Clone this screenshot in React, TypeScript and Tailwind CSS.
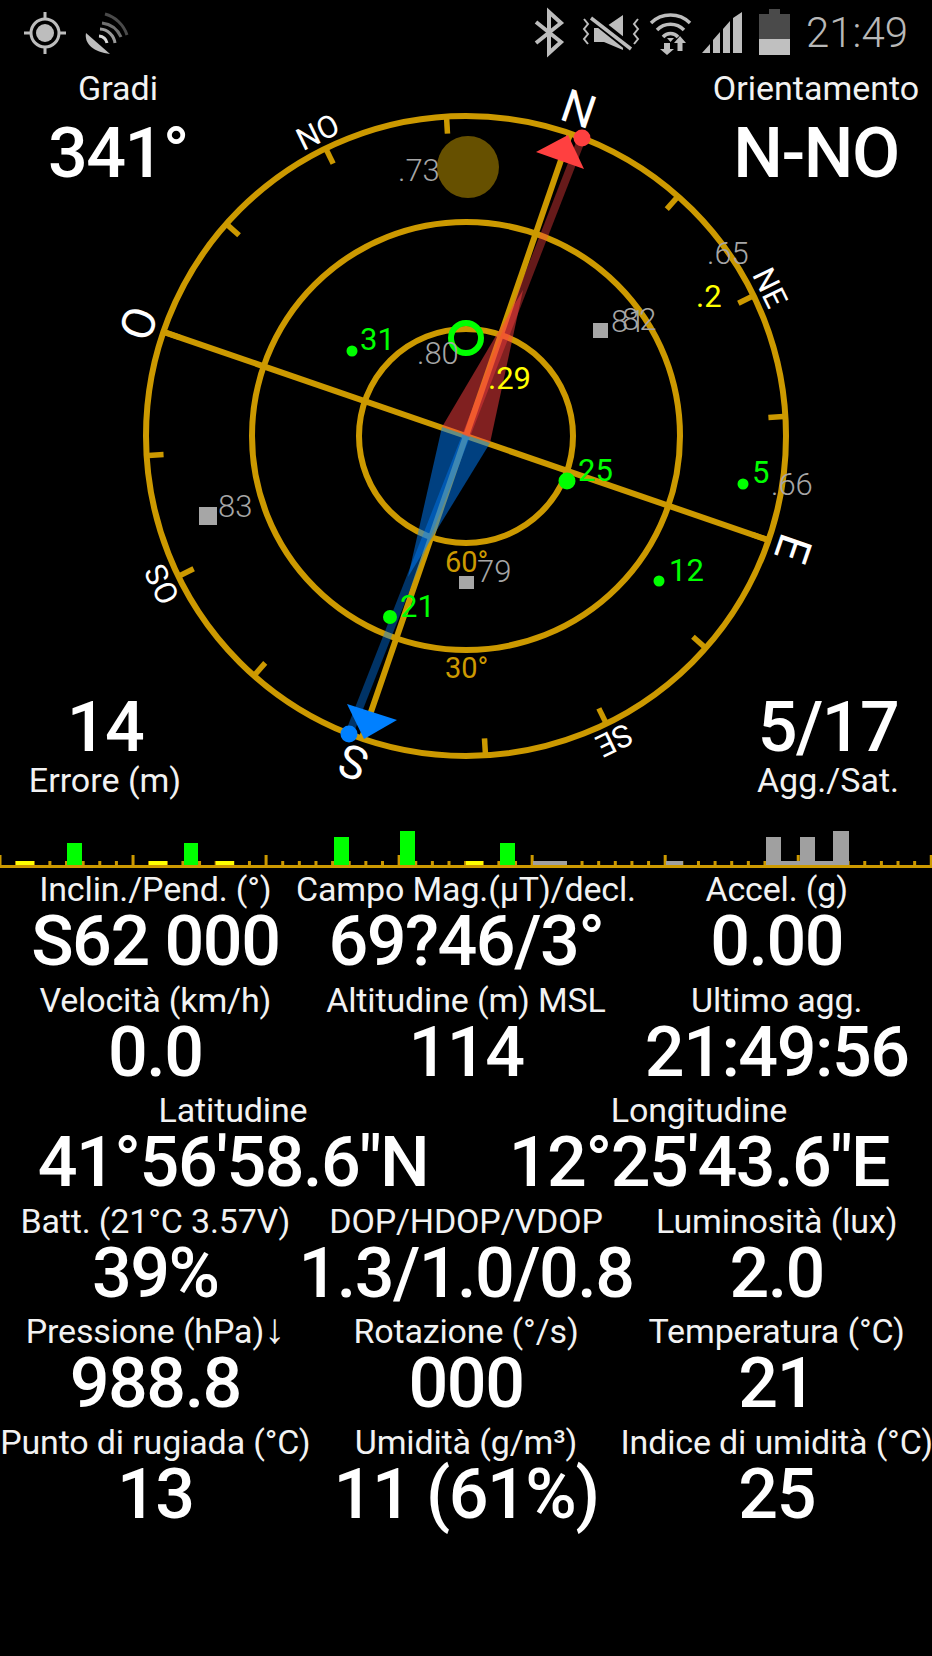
import React from "react";

const GOLD = "#cc9900";
const CX = 466;
const CY = 436;
const ROT = 19;

function polar(r: number, bearing: number): [number, number] {
  const a = ((bearing + ROT) * Math.PI) / 180;
  return [CX + r * Math.sin(a), CY - r * Math.cos(a)];
}

const ticks = Array.from({ length: 16 }, (_, i) => i * 22.5);

const dirLabels: { t: string; b: number; r: number; s: number }[] = [
  { t: "N", b: 0, r: 346, s: 46 },
  { t: "E", b: 90, r: 346, s: 46 },
  { t: "S", b: 180, r: 345, s: 46 },
  { t: "O", b: 270, r: 346, s: 46 },
  { t: "NE", b: 45, r: 338, s: 31 },
  { t: "SE", b: 135, r: 338, s: 31 },
  { t: "OS", b: 225, r: 338, s: 31 },
  { t: "NO", b: 315, r: 338, s: 31 },
];

const GRAY = "#a6a6a6";
const GREEN = "#00ff00";
const YELLOW = "#ffff00";

const satLabels: { t: string; x: number; y: number; c: string; w: number }[] = [
  { t: "31", x: 360, y: 350, c: GREEN, w: 400 },
  { t: ".80", x: 417, y: 364, c: GRAY, w: 300 },
  { t: ".73", x: 398, y: 181, c: GRAY, w: 300 },
  { t: ".29", x: 488, y: 389, c: YELLOW, w: 400 },
  { t: "81", x: 611, y: 332, c: GRAY, w: 300 },
  { t: "82", x: 622, y: 330, c: GRAY, w: 300 },
  { t: ".65", x: 707, y: 264, c: GRAY, w: 300 },
  { t: ".2", x: 696, y: 307, c: YELLOW, w: 400 },
  { t: "25", x: 578, y: 481, c: GREEN, w: 400 },
  { t: "5", x: 752, y: 483, c: GREEN, w: 400 },
  { t: ".66", x: 771, y: 495, c: GRAY, w: 300 },
  { t: "12", x: 669, y: 581, c: GREEN, w: 400 },
  { t: "79", x: 477, y: 582, c: GRAY, w: 300 },
  { t: "83", x: 218, y: 517, c: GRAY, w: 300 },
  { t: "21", x: 400, y: 617, c: GREEN, w: 400 },
];

function Compass() {
  return (
    <svg className="absolute left-0 top-0" width={932} height={820} viewBox="0 0 932 820">
      <circle cx={468} cy={167} r={31} fill="#665000" />
      <g fill="none" stroke={GOLD} strokeWidth={6}>
        <circle cx={CX} cy={CY} r={320} />
        <circle cx={CX} cy={CY} r={214} />
        <circle cx={CX} cy={CY} r={107} />
      </g>
      {ticks.map((b) => {
        const [x1, y1] = polar(322, b);
        const [x2, y2] = polar(303, b);
        return <line key={b} x1={x1} y1={y1} x2={x2} y2={y2} stroke={GOLD} strokeWidth={5.5} />;
      })}
      {[0, 90, 180, 270].map((b) => {
        const [x, y] = polar(320, b);
        return <line key={b} x1={CX} y1={CY} x2={x} y2={y} stroke={GOLD} strokeWidth={6} />;
      })}
      <polygon points="523,290 490,443 442,427" fill="#ff4040" fillOpacity={0.5} />
      <polygon points="408,577 490,443 442,427" fill="#0080ff" fillOpacity={0.5} />
      <line x1={582} y1={138} x2={466} y2={436} stroke="#ff4040" strokeOpacity={0.4} strokeWidth={8} />
      <line x1={349} y1={734} x2={466} y2={436} stroke="#0080ff" strokeOpacity={0.4} strokeWidth={8} />
      <polygon points="536,152 568,135 584,169" fill="#ff4040" />
      <circle cx={582} cy={138} r={8.5} fill="#ff4040" />
      <polygon points="347,704 397,720 364,739" fill="#0080ff" />
      <circle cx={349} cy={734} r={8.5} fill="#0080ff" />
      <circle cx={466} cy={338} r={15} fill="none" stroke={GREEN} strokeWidth={6} />
      <circle cx={352} cy={351} r={5.5} fill={GREEN} />
      <circle cx={567} cy={481} r={8.5} fill={GREEN} />
      <circle cx={743} cy={484} r={5.5} fill={GREEN} />
      <circle cx={659} cy={581} r={5.5} fill={GREEN} />
      <circle cx={390} cy={617} r={7} fill={GREEN} />
      <rect x={593} y={323} width={15} height={15} fill={GRAY} />
      <rect x={459} y={576} width={15} height={13} fill={GRAY} />
      <rect x={199} y={507} width={18} height={18} fill={GRAY} />
      <g fontFamily="Roboto, sans-serif" fontSize={31}>
        <text x={445} y={572} fontSize={29} fill={GOLD}>60°</text>
        <text x={445} y={678} fontSize={29} fill={GOLD}>30°</text>
        {satLabels.map((s) => (
          <text key={s.t} x={s.x} y={s.y} fill={s.c} fontWeight={s.w}>
            {s.t}
          </text>
        ))}
      </g>
      <g fontFamily="Roboto, sans-serif" fontWeight={400} fill="#ffffff" textAnchor="middle">
        {dirLabels.map((d) => {
          const [x, y] = polar(d.r, d.b);
          return (
            <text
              key={d.t}
              x={0}
              y={0}
              fontSize={d.s}
              dominantBaseline="central"
              transform={`translate(${x} ${y}) rotate(${d.b + ROT})`}
            >
              {d.t}
            </text>
          );
        })}
      </g>
    </svg>
  );
}

function StatusLeft() {
  return (
    <svg width={140} height={60} viewBox="0 0 140 60" className="block">
      <g stroke="#bdbdbd" fill="none" strokeWidth={3}>
        <circle cx={45} cy={33} r={14} />
        <path d="M45 12v7M45 47v7M24 33h7M59 33h7" />
      </g>
      <circle cx={45} cy={33} r={9} fill="#bdbdbd" />
      <path d="M86 33 C84 44 94 52 110 54 Z" fill="#bdbdbd" />
      <g fill="none" strokeWidth={3}>
        <path d="M99 36a9 9 0 0 1 8 7" stroke="#d8d8d8" />
        <path d="M100 29a16 16 0 0 1 15 14" stroke="#9a9a9a" />
        <path d="M102 23a24 24 0 0 1 19 14" stroke="#707070" />
        <path d="M105 14a32 32 0 0 1 22 21" stroke="#4a4a4a" />
      </g>
    </svg>
  );
}

function StatusRight() {
  return (
    <svg width={282} height={60} viewBox="520 0 282 60" className="block">
      <path d="M535 22 L560 42 L548 53 V12 L560 23 L535 43" fill="none" stroke="#bdbdbd" strokeWidth={4} />
      <path d="M593 28 h10 l19 -13 v35 l-19 -8 h-10 z" fill="#bdbdbd" />
      <path d="M588 15 L632 50" stroke="#000" strokeWidth={9} />
      <path d="M590 18 L630 49" stroke="#bdbdbd" strokeWidth={3.5} />
      <path d="M583 19l4 5-4 5 4 5-4 5 4 5M637 19l-4 5 4 5-4 5 4 5-4 5" fill="none" stroke="#bdbdbd" strokeWidth={2} />
      <g fill="none" stroke="#bdbdbd" strokeWidth={3.5}>
        <path d="M650 23a28 28 0 0 1 39 0" />
        <path d="M656 30a19 19 0 0 1 27 0" />
        <path d="M662 37a10 10 0 0 1 15 0" />
      </g>
      <path d="M666 38h7l-3.500 4z" fill="#bdbdbd" />
      <path d="M663 43v6h-4l7 6 7-6h-4v-6zM679 36l-6 7h3.500v8h5v-8h3.500z" fill="#bdbdbd" />
      <path d="M701 53 L709 44 V53 Z M712 53 V40 L719 32 V53 Z M722 53 V29 L729 21 V53 Z M732 53 V18 L741 12 V53 Z" fill="#bdbdbd" />
      <rect x={768} y={9} width={11} height={5} fill="#4a4a4a" />
      <rect x={758} y={14} width={31} height={25} fill="#4a4a4a" />
      <rect x={758} y={39} width={31} height={16} fill="#c0c0c0" />
    </svg>
  );
}

const bars: { x: number; w: number; top: number; c: string }[] = [
  { x: 16, w: 18, top: 861, c: "#ffff00" },
  { x: 67, w: 15, top: 843, c: "#00ff00" },
  { x: 149, w: 18, top: 861, c: "#ffff00" },
  { x: 184, w: 14, top: 843, c: "#00ff00" },
  { x: 216, w: 18, top: 861, c: "#ffff00" },
  { x: 334, w: 15, top: 837, c: "#00ff00" },
  { x: 400, w: 15, top: 831, c: "#00ff00" },
  { x: 466, w: 17, top: 861, c: "#ffff00" },
  { x: 500, w: 15, top: 843, c: "#00ff00" },
  { x: 533, w: 34, top: 861, c: "#a0a0a0" },
  { x: 666, w: 17, top: 861, c: "#a0a0a0" },
  { x: 766, w: 15, top: 837, c: "#a0a0a0" },
  { x: 781, w: 19, top: 861, c: "#a0a0a0" },
  { x: 800, w: 15, top: 837, c: "#a0a0a0" },
  { x: 815, w: 18, top: 861, c: "#a0a0a0" },
  { x: 833, w: 16, top: 831, c: "#a0a0a0" },
];

function SignalChart() {
  const step = 16.63;
  const n = Math.floor(932 / step);
  return (
    <svg width={932} height={50} viewBox="0 820 932 50" className="block">
      {Array.from({ length: n + 1 }, (_, i) => {
        const x = i * step;
        const major = i % 8 === 0;
        return <rect key={i} x={x - 1.5} y={major ? 855 : 861} width={3} height={major ? 11 : 5} fill={GOLD} />;
      })}
      {bars.map((b) => (
        <rect key={b.x} x={b.x} y={b.top} width={b.w} height={866 - b.top} fill={b.c} />
      ))}
      <rect x={0} y={865} width={932} height={3} fill={GOLD} />
    </svg>
  );
}

function Stat({ label, value }: { label: React.ReactNode; value: string }) {
  return (
    <div className="flex flex-col items-center whitespace-nowrap">
      <div className="h-10 text-[34px] leading-[36px] tracking-[-0.15px] text-[#f2f2f2]">{label}</div>
      <div className="h-[60px] text-[70px] font-medium leading-[60px] tracking-[-1.5px] text-white">{value}</div>
    </div>
  );
}

function Corner({ label, value, below, className }: { label: string; value: string; below?: boolean; className: string }) {
  return (
    <div className={`flex flex-col items-center whitespace-nowrap ${className}`}>
      {!below && <div className="h-[50px] text-[34px] leading-10 text-[#f2f2f2]">{label}</div>}
      <div className="h-[70px] text-[70px] font-medium leading-[70px] tracking-[-1.5px] text-white">{value}</div>
      {below && <div className="h-10 text-[34px] leading-[36px] text-[#f2f2f2]">{label}</div>}
    </div>
  );
}

export default function App() {
  const rows: [React.ReactNode, string][][] = [
    [["Inclin./Pend. (°)", "S62 000"], ["Campo Mag.(μT)/decl.", "69?46/3°"], ["Accel. (g)", "0.00"]],
    [["Velocità (km/h)", "0.0"], ["Altitudine (m) MSL", "114"], ["Ultimo agg.", "21:49:56"]],
  ];
  const rows2: [React.ReactNode, string][][] = [
    [["Batt. (21°C 3.57V)", "39%"], ["DOP/HDOP/VDOP", "1.3/1.0/0.8"], ["Luminosità (lux)", "2.0"]],
    [
      [<>Pressione (hPa)<span className="text-[42px] font-light leading-[0]">↓</span></>, "988.8"],
      ["Rotazione (°/s)", "000"],
      ["Temperatura (°C)", "21"],
    ],
    [["Punto di rugiada (°C)", "13"], ["Umidità (g/m³)", "11 (61%)"], ["Indice di umidità (°C)", "25"]],
  ];
  return (
    <div className="flex h-[1656px] w-[932px] flex-col overflow-hidden bg-black font-[Roboto,sans-serif] text-white">
      <div className="relative h-[820px] shrink-0">
        <Compass />
        <div className="relative flex h-[820px] flex-col">
          <div className="flex h-[50px] items-start justify-between">
            <StatusLeft />
            <div className="flex items-start">
              <StatusRight />
              <div className="ml-[3px] mr-[24px] pt-[8px] text-[42px] font-light leading-[50px] text-[#b8b8b8]">21:49</div>
            </div>
          </div>
          <div className="flex items-start justify-between pl-[48px] pr-[16px] pt-[18px]">
            <Corner label="Gradi" value="341°" className="w-[140px]" />
            <Corner label="Orientamento" value="N-NO" className="w-[200px]" />
          </div>
          <div className="mt-[504px] flex items-start justify-between pl-[30px] pr-[34px]">
            <Corner label="Errore (m)" value="14" below className="w-[150px]" />
            <Corner label="Agg./Sat." value="5/17" below className="w-[140px]" />
          </div>
        </div>
      </div>
      <SignalChart />
      <div className="flex flex-col gap-[10.5px] pt-[1px]">
        {rows.map((r, i) => (
          <div key={i} className="grid grid-cols-3">
            {r.map(([l, v]) => (
              <Stat key={v} label={l} value={v} />
            ))}
          </div>
        ))}
        <div className="grid grid-cols-2">
          <Stat label="Latitudine" value={"41°56'58.6\"N"} />
          <Stat label="Longitudine" value={"12°25'43.6\"E"} />
        </div>
        {rows2.map((r, i) => (
          <div key={i} className="grid grid-cols-3">
            {r.map(([l, v]) => (
              <Stat key={v} label={l} value={v} />
            ))}
          </div>
        ))}
      </div>
    </div>
  );
}
